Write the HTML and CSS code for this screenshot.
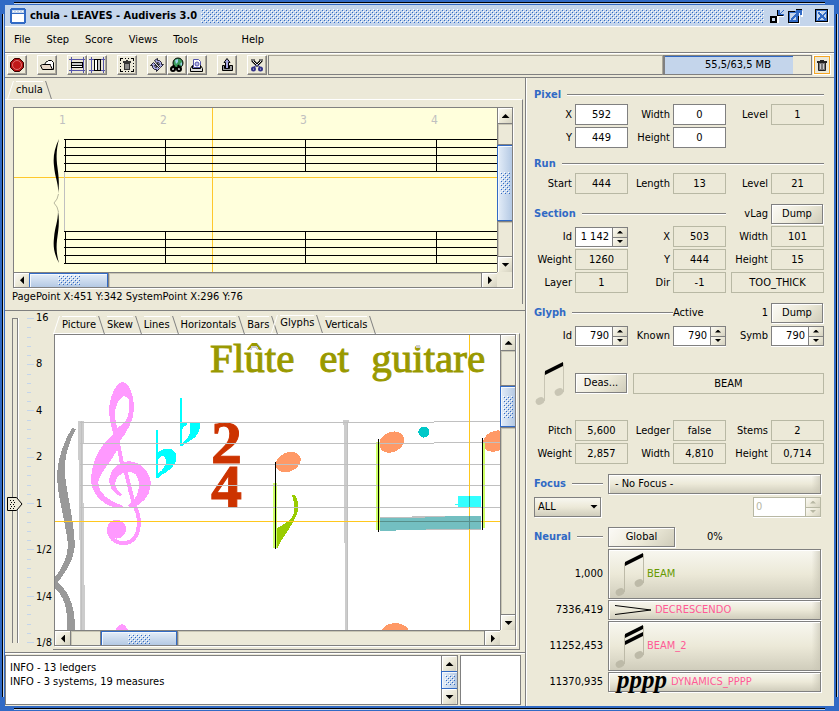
FILE: index.html
```html
<!DOCTYPE html>
<html lang="en">
<head>
<meta charset="utf-8">
<title>chula - LEAVES - Audiveris 3.0</title>
<link rel="stylesheet" href="styles.css">
</head>
<body>
<div class="window">
  <header class="titlebar">
    <svg class="app-icon" width="16" height="16" shape-rendering="crispEdges"><path fill="#316ac5" d="M1 0h14v1h1v14h-1v1H1v-1H0V1h1z"/><path fill="#fff" d="M2 6h12v8H2z"/><path fill="#c4d5eb" d="M2 2h12v3H2z"/><path stroke="#fff" stroke-dasharray="1 2" d="M3 3.500h10"/></svg>
    <h1>chula - LEAVES - Audiveris 3.0</h1>
    <div class="dots title-dots"></div>
    <div class="window-buttons">
      <button aria-label="Minimize"><svg width="16" height="16" shape-rendering="crispEdges"><path fill="#fff" d="M2 8h8v7H2zM9 8h6v1H9z"/><path fill="#316ac5" d="M9 2h2v3h1V4h1V3h1V2h1v1h-1v1h-1v1h-1v1h3v2H9z"/><path fill="#c4d5eb" stroke="#000" stroke-width="2" d="M2 9h5v5H2z"/><path fill="#000" d="M8 2h1v6H8zM8 7h6v1H8z"/></svg></button>
      <button aria-label="Maximize"><svg width="16" height="16" shape-rendering="crispEdges"><path fill="#fff" d="M2 4h11v12H2zM14 3h2v6h-2z"/><path fill="#316ac5" d="M1 3h11v12H1z"/><path fill="#c4d5eb" d="M3 5h6v7H3z"/><path fill="none" stroke="#000" d="M1.500 3.500H8M1.500 3v11.500h10V8"/><path fill="#316ac5" d="M9 1h6v6h-2V5h-1v1h-1v1h-1v1H9v1H8v1H7v1H6v1H4v-2h1V9h1V8h1V7h1V6h1V5h1V4h1V3H9z"/><path stroke="#000" d="M9 1.500h6"/></svg></button>
      <button class="close" aria-label="Close"><svg width="16" height="16" shape-rendering="crispEdges"><path fill="#fff" d="M2 2h13v13H2z"/><path fill="#c4d5eb" stroke="#316ac5" d="M2.500 2.500h10v10h-10z"/><path fill="none" stroke="#000" d="M1.500 1.500h12v12h-12z"/><path fill="#fff" d="M5 4h2v2H5zM10 5h2v1h-2zM5 9h2v1H5z"/><path fill="#316ac5" d="M4 4h2v1h1v1h1v1h1V6h1V5h1V4h1v2h-1v1h-1v2h1v1h1v2h-2v-1h-1v-1H7v1H6v1H4v-2h1V9h1V7H5V6H4z"/></svg></button>
    </div>
  </header>

  <nav class="menubar">
    <button>File</button><button>Step</button><button>Score</button><button>Views</button><button>Tools</button><button class="help">Help</button>
  </nav>

  <div class="toolbar">
    <button class="tool" aria-label="Stop"><svg width="16" height="16"><path fill="#b01010" stroke="#300" d="M5.500 1.500h5l4 4v5l-4 4h-5l-4-4v-5z"/><circle cx="8" cy="8" r="4.500" fill="#c01818" stroke="#e07070"/></svg></button>
    <span class="gap"></span>
    <button class="tool" aria-label="Open"><svg width="16" height="16"><path fill="#fff" stroke="#000" d="M5.500 7.500l2-3h1l1-1h3l2 2v7h-3"/><path fill="#e8d8c8" stroke="#000" d="M1.500 8.500l2-1h8v1l2 4h-10z"/></svg></button>
    <span class="gap"></span>
    <button class="tool" aria-label="Horizontal lag"><svg width="16" height="16" shape-rendering="crispEdges"><path stroke="#55a" d="M0 2.500h16M0 13.500h16M2.500 0v16M14.500 0v16"/><path fill="#c8c8c8" stroke="#000" d="M2.500 5.500h11v3h-11z"/><path fill="#fff" stroke="#000" d="M2.500 8.500h11v2h-11z"/></svg></button><button class="tool" aria-label="Vertical lag"><svg width="16" height="16" shape-rendering="crispEdges"><path stroke="#55a" d="M0 2.500h16M0 13.500h16M2.500 0v16M14.500 0v16"/><path fill="#fff" stroke="#000" d="M5.500 2.500h3v11h-3z"/><path fill="#c8c8c8" stroke="#000" d="M8.500 2.500h3v11h-3z"/></svg></button>
    <span class="gap"></span>
    <button class="tool" aria-label="Delete selection"><svg width="16" height="16" shape-rendering="crispEdges"><path fill="none" stroke="#000" d="M1.500 4V1.500H4M6 1.500h1M9 1.500h1M12 1.500h2.500V4M14.500 6v1M14.500 9v1M14.500 12v2.500H12M10 14.500H9M7 14.500H6M4 14.500H1.500V12M1.500 10V9M1.500 7V6"/><path fill="#888" stroke="#333" d="M5.500 6.500h5v6h-5z"/><path fill="#333" d="M4 4h8v2H4zM7 3h2v1H7z"/></svg></button>
    <span class="gap"></span>
    <button class="tool" aria-label="Refresh"><svg width="16" height="16"><path fill="#a8a8e0" stroke="#223" d="M5.500 3.500l3-2v2h2l2 2v2h2l-3 3-3-3h2l-1-2h-1v2zM1.500 8.500l3-3 3 3h-2l1 2h1v-2l3 3-3 3v-2h-2l-2-2v-2z"/></svg></button><button class="tool" aria-label="Find"><svg width="16" height="16"><circle cx="9" cy="6" r="5" fill="#3a9a5a" stroke="#000"/><path fill="#9ad0e8" d="M6 3l3-1v3L7 7zM11 7l2-2v4z"/><circle cx="4" cy="12" r="2" fill="#ddd" stroke="#000" stroke-width="2"/><circle cx="10" cy="12" r="2" fill="#ddd" stroke="#000" stroke-width="2"/><path stroke="#000" stroke-width="2" d="M5 8l-2 3M9 8l2 3M6 11h3"/></svg></button><button class="tool" aria-label="Print"><svg width="16" height="16"><path fill="#fff" stroke="#55a" d="M4.500 2.500h5l2 2v6h-7z"/><circle cx="8" cy="7" r="2" fill="#b8b8e8" stroke="#55a"/><path fill="#ddd" stroke="#000" d="M3.500 8.500l-2 3v3h12v-3l-2-3v3h-8z"/></svg></button>
    <span class="gap"></span>
    <button class="tool" aria-label="Export"><svg width="16" height="16"><path fill="#999" stroke="#000" d="M3.500 8.500h2v3h5v-3h3v5h-10z"/><path fill="#a8a8e0" stroke="#000" d="M8 1.500l3 4H9.500v6h-3v-6H5z"/></svg></button>
    <span class="gap"></span>
    <button class="tool" aria-label="Cut"><svg width="16" height="16"><path fill="none" stroke="#000" stroke-width="3" d="M4 2v2l5 5M12 2v2L7 9"/><path fill="none" stroke="#eee" d="M4 2v2l5 5M12 2v2l-5 5"/><circle cx="4.500" cy="12" r="1.500" fill="#fff" stroke="#338" stroke-width="2"/><circle cx="11.500" cy="12" r="1.500" fill="#fff" stroke="#338" stroke-width="2"/><path fill="none" stroke="#338" d="M5 10l3-2 3 2"/></svg></button>
    <input class="progress" type="text" readonly aria-label="Progress">
    <div class="memory"><span>55,5/63,5 MB</span></div>
    <button class="trash" aria-label="Run garbage collector"><svg width="14" height="16"><path fill="#777" stroke="#222" d="M3.500 5.500h7v8h-7z"/><path stroke="#ccc" d="M5.500 7v5M8.500 7v5"/><path stroke="#222" stroke-width="2" d="M2 5h10"/><path stroke="#222" d="M5 3.500h4"/></svg></button>
  </div>

  <main class="main">
    <section class="left">
      <div class="score">
        <div class="tabs score-tabs"><button class="tab first selected">chula</button></div>
        <div class="score-body">
          <div class="scrollpane">
            <svg class="view score-view" viewBox="14 108 483 164" preserveAspectRatio="xMinYMin slice" shape-rendering="crispEdges">
              <path stroke="#ffc82c" d="M14 177.500h483M212.500 108v164"/>
              <path stroke="#c0c0c0" d="M64.500 171v60"/>
              <path stroke="#000" d="M64 139.500h433M64 147.500h433M64 155.500h433M64 163.500h433M64 171.500h433M64 231.500h433M64 239.500h433M64 247.500h433M64 255.500h433M64 263.500h433M65.500 139v33M165.500 139v33M305.500 139v33M436.500 139v33M65.500 231v33M165.500 231v33M305.500 231v33M436.500 231v33"/>
              <g shape-rendering="auto"><path d="M59 139C54 149 53 158 54 166C55 178 59 184 58 194C60 182 58 172 57 164C56 154 57 147 59 139zM58 211C60 223 58 232 57 240C56 250 57 256 59 263C54 254 53 246 54 238C55 226 58 222 58 211z"/>
              <path fill="none" stroke="#b8b8a0" d="M58.500 194L57 199L54 203L57 207L58.500 212"/></g>
              <g class="measure-ids"><text x="59" y="124">1</text><text x="160" y="124">2</text><text x="300" y="124">3</text><text x="431" y="124">4</text></g>
            </svg>
            <div class="scroll v"><button aria-label="Up"><i class="arrow up"></i></button><span class="track a21"></span><span class="thumb a78"><b class="dots"></b></span><span class="track a35"></span><button aria-label="Down"><i class="arrow down"></i></button></div>
            <div class="scroll h"><button aria-label="Left"><i class="arrow lft"></i></button><span class="thumb a78"><b class="dots"></b></span><span class="track a374"></span><button aria-label="Right"><i class="arrow rgt"></i></button></div>
          </div>
          <p class="status">PagePoint X:451 Y:342 SystemPoint X:296 Y:76</p>
        </div>
      </div>

      <div class="sheet">
        <div class="zoom">
          <div class="slider">
            <input type="range" min="-3" max="4" value="0" aria-label="Zoom">
            <svg class="knob" width="16" height="14"><path fill="#ece9d8" stroke="#000" d="M.500.500h9l5.500 6.500-5.500 6.500h-9z"/><path stroke="#000" stroke-dasharray="1 2" d="M3 3.500h6M4 5.500h6M3 7.500h6M4 9.500h6M3 11.500h6"/></svg>
          </div>
          <svg class="ticks" width="8" height="325" shape-rendering="crispEdges"><path stroke="#c4d5eb" d="M0 .500h7M0 46.500h7M0 92.500h7M0 139.500h7M0 185.500h7M0 231.500h7M0 278.500h7M0 324.500h7M0 9.500h4M0 19.500h4M0 28.500h4M0 37.500h4M0 56.500h4M0 65.500h4M0 74.500h4M0 83.500h4M0 102.500h4M0 111.500h4M0 120.500h4M0 130.500h4M0 148.500h4M0 157.500h4M0 167.500h4M0 176.500h4M0 194.500h4M0 204.500h4M0 213.500h4M0 222.500h4M0 241.500h4M0 250.500h4M0 259.500h4M0 269.500h4M0 287.500h4M0 296.500h4M0 306.500h4M0 315.500h4"/></svg>
          <div class="zoom-labels"><span>16</span><span>8</span><span>4</span><span>2</span><span>1</span><span>1/2</span><span>1/4</span><span>1/8</span></div>
        </div>
        <div class="sheet-tabs">
          <div class="tabs"><button class="tab first">Picture</button><button class="tab">Skew</button><button class="tab">Lines</button><button class="tab">Horizontals</button><button class="tab">Bars</button><button class="tab selected">Glyphs</button><button class="tab">Verticals</button></div>
          <div class="sheet-body">
            <div class="scrollpane">
              <svg class="view" viewBox="55 335 445 295" preserveAspectRatio="xMinYMin slice" shape-rendering="crispEdges">
                <rect x="55" y="335" width="900" height="900" fill="#fff"/>
                <path fill="#999" d="M72 428l4 1C68 444 64 458 65 473C66 492 74 518 75 545C74 562 64 573 58 582C66 590 75 600 75 630H67C68 605 63 596 55 588v-11C62 568 68 557 68 545C66 524 57 495 57 474C58 457 64 441 72 428z"/>
                <path fill="#ccc" d="M78 421h6v22h-1v60h1v82h1v45h-5v-90h-1v-80h-1zM343 420h6v3h-1v210h1v0h-4v-90h-1V425h-1z"/>
                <g fill="#f9f">
                  <path fill-rule="evenodd" d="M122 382C115 384 109 398 109 412C110 422 112 428 113 434C100 446 91 460 91 482C93 497 106 507 120 508L124 506C108 501 98 493 98 482C101 470 111 463 117 450L120 441C128 430 134 420 134 407C133 392 128 382 122 382zM124 396C118 398 114 408 115 418L117 428C124 424 129 418 129 409C130 402 129 396 124 396z"/>
                  <path d="M120 496C113 493 109 487 109 479C111 468 119 461 129 461C141 462 150 472 151 484C150 497 141 505 131 508L128 505C136 500 139 492 139 483C138 475 134 471 128 472C120 472 115 478 115 484C116 489 119 492 122 494z"/>
                  <path fill="none" stroke="#f9f" stroke-width="4" d="M118 444C121 454 120 464 126 473C130 488 132 502 138 514C141 534 134 543 123 543C115 543 109 537 109 530"/>
                  <circle cx="116.500" cy="529" r="9.500"/><path d="M115 630l4-5 3-1 3 1 3 5z"/>
                </g>
                <g fill="#0ff">
                  <path fill-rule="evenodd" d="M156 430h2v22C163 448 171 447 174 451C178 455 177 461 173 466C168 472 163 473 158 478h-2zM158 459v14C163 470 166 466 166 460C165 454 161 455 158 459z"/>
                  <path fill-rule="evenodd" d="M180 398h2v25h5v2c-2 0-4 2-5 4v14c6-4 8-8 8-14v-6h10c0 6-1 10-5 14c-4 4-9 5-13 9h-2z"/>
                </g>
                <g class="time"><text x="211" y="463">2</text><text x="211" y="507">4</text></g>
                <g fill="#f96"><ellipse cx="288" cy="462" rx="13" ry="9.500" transform="rotate(-25 288 462)"/><ellipse cx="391.500" cy="442" rx="13" ry="10" transform="rotate(-25 391.500 442)"/><ellipse cx="495" cy="441" rx="13" ry="10" transform="rotate(-25 495 441)"/><ellipse cx="395" cy="633" rx="14" ry="10"/></g>
                <path fill="#9c0" d="M292 495h3C299 502 299 509 296 516C292 526 284 534 277 548v-20C284 524 290 521 293 515C295 509 294 502 292 495z"/>
                <circle cx="423.500" cy="432" r="5.500" fill="#00c8c8"/>
                <path fill="#cf6" d="M273 483h4v65h-4zM376 442h4v88h-4zM482 443h3v85h-3z"/>
                <path stroke="#c0c0c0" d="M80 422.500h354M434 421.500h66M80 443.500h354M434 442.500h66M80 464.500h420M80 485.500h420M80 507.500h420"/>
                <path stroke="#c0c0c0" d="M81.500 421v209M347.500 423v207"/>
                <path fill="#3ff" d="M458 496h23v11h-23v-2h-3v-1h3z"/>
                <path fill="#c0c0c0" d="M380 517l50-1h51v14H380z"/><path fill="#73bfc1" d="M380 518h45v-1h20v-1h36v13h-55v1h-30v1h-16z"/>
                <path stroke="#ffc81e" d="M55 521.500h445M469.500 335v295"/>
                <path stroke="#57908b" d="M380 521.500h101M469.500 516v13"/><path stroke="#20b0a0" d="M469.500 496v11"/>
                <path stroke="#000" d="M275.500 462v87M378.500 439v93M482.500 438v92"/>
                <g class="song-title"><text x="210" y="372">Flûte</text><text x="319" y="372">et</text><text x="371" y="372">guitare</text></g>
                <path fill="none" stroke="#ccc" stroke-width="2" d="M250 350l2-3h4l2 3"/><path fill="#ccc" d="M416 345h4v3h-4z"/>
              </svg>
              <div class="scroll v"><button aria-label="Up"><i class="arrow up"></i></button><span class="track a35"></span><span class="thumb a40"><b class="dots"></b></span><span class="track a189"></span><button aria-label="Down"><i class="arrow down"></i></button></div>
              <div class="scroll h"><button aria-label="Left"><i class="arrow lft"></i></button><span class="track a29"></span><span class="thumb a75"><b class="dots"></b></span><span class="track a310"></span><button aria-label="Right"><i class="arrow rgt"></i></button></div>
            </div>
          </div>
        </div>
      </div>

      <div class="bottom">
        <div class="log">
          <div class="log-text">INFO - 13 ledgers<br>INFO - 3 systems, 19 measures</div>
          <div class="scroll v"><button aria-label="Up"><i class="arrow up"></i></button><span class="thumb a78"><b class="dots"></b></span><button aria-label="Down"><i class="arrow down"></i></button></div>
        </div>
        <div class="errors"></div>
      </div>
    </section>

    <aside class="boards">
      <section>
        <div class="heading"><h2>Pixel</h2><hr></div>
        <div class="fields">
          <label for="px">X</label><input id="px" value="592"><label for="pw">Width</label><input id="pw" value="0"><label for="pl">Level</label><input id="pl" value="1" readonly>
          <label for="py">Y</label><input id="py" value="449"><label for="ph">Height</label><input id="ph" value="0">
        </div>
      </section>
      <section>
        <div class="heading"><h2>Run</h2><hr></div>
        <div class="fields">
          <label for="rs">Start</label><input id="rs" value="444" readonly><label for="rl">Length</label><input id="rl" value="13" readonly><label for="rv">Level</label><input id="rv" value="21" readonly>
        </div>
      </section>
      <section>
        <div class="fields">
          <div class="heading span4"><h2>Section</h2><hr></div><span class="tag">vLag</span><button class="btn">Dump</button>
          <label for="si">Id</label><div class="spin"><input id="si" value="1 142"><div><button aria-label="Increase"><i class="arrow up"></i></button><button aria-label="Decrease"><i class="arrow down"></i></button></div></div><label for="sx">X</label><input id="sx" value="503" readonly><label for="sw">Width</label><input id="sw" value="101" readonly>
          <label for="sg">Weight</label><input id="sg" value="1260" readonly><label for="sy">Y</label><input id="sy" value="444" readonly><label for="sh">Height</label><input id="sh" value="15" readonly>
          <label for="sl">Layer</label><input id="sl" value="1" readonly><label for="sd">Dir</label><input id="sd" value="-1" readonly><input class="span2 inset" value="TOO_THICK" readonly aria-label="Section kind">
        </div>
      </section>
      <section>
        <div class="fields">
          <div class="heading span2"><h2>Glyph</h2><hr></div><hr class="rule"><span>Active</span><span class="tag">1</span><button class="btn">Dump</button>
          <label for="gi">Id</label><div class="spin"><input id="gi" value="790"><div><button aria-label="Increase"><i class="arrow up"></i></button><button aria-label="Decrease"><i class="arrow down"></i></button></div></div><label for="gk">Known</label><div class="spin"><input id="gk" value="790"><div><button aria-label="Increase"><i class="arrow up"></i></button><button aria-label="Decrease"><i class="arrow down"></i></button></div></div><label for="gs">Symb</label><div class="spin"><input id="gs" value="790"><div><button aria-label="Increase"><i class="arrow up"></i></button><button aria-label="Decrease"><i class="arrow down"></i></button></div></div>
        </div>
        <div class="fields shape-row">
          <svg width="32" height="46"><g fill="#c8c5b4"><ellipse cx="6" cy="41" rx="4.500" ry="3.500" transform="rotate(-25 6 41)"/><ellipse cx="25" cy="32" rx="4.500" ry="3.500" transform="rotate(-25 25 32)"/><path d="M10 12h1v29h-1zM29 3h1v29h-1z"/></g><path d="M11 11l18-9v4l-18 9z"/></svg>
          <button class="btn">Deas...</button><input class="span4 inset" value="BEAM" readonly aria-label="Glyph shape">
        </div>
        <div class="fields">
          <label for="gp">Pitch</label><input id="gp" value="5,600" readonly><label for="gl">Ledger</label><input id="gl" value="false" readonly><label for="gt">Stems</label><input id="gt" value="2" readonly>
          <label for="gg">Weight</label><input id="gg" value="2,857" readonly><label for="gw">Width</label><input id="gw" value="4,810" readonly><label for="gh">Height</label><input id="gh" value="0,714" readonly>
        </div>
      </section>
      <section class="pair">
        <div class="heading"><h2>Focus</h2><hr></div><button class="btn start">- No Focus -</button>
        <div class="select"><select aria-label="Focus filter"><option>ALL</option></select><i class="arrow down big"></i></div>
        <div class="spin off"><input value="0" disabled aria-label="Focus index"><div><button disabled aria-label="Increase"><i class="arrow up"></i></button><button disabled aria-label="Decrease"><i class="arrow down"></i></button></div></div>
      </section>
      <section class="pair">
        <div class="heading"><h2>Neural</h2><hr></div><div class="neural"><button class="btn">Global</button><span>0%</span></div>
      </section>
      <div class="results">
        <span>1,000</span>
        <button class="btn start tall good"><svg width="30" height="46"><g fill="#bdbaa8"><ellipse cx="5" cy="41" rx="4.500" ry="3.500" transform="rotate(-25 5 41)"/><ellipse cx="24" cy="32" rx="4.500" ry="3.500" transform="rotate(-25 24 32)"/><path d="M9 12h1v29H9zM28 3h1v29h-1z"/></g><path d="M10 11l18-9v4l-18 9z"/></svg>BEAM</button>
        <span>7336,419</span>
        <button class="btn start bad"><svg width="38" height="12"><path fill="none" stroke="#000" d="M0 1.500L36 6L0 10.500"/></svg>DECRESCENDO</button>
        <span>11252,453</span>
        <button class="btn start tall bad"><svg width="30" height="46"><g fill="#bdbaa8"><ellipse cx="5" cy="41" rx="4.500" ry="3.500" transform="rotate(-25 5 41)"/><ellipse cx="24" cy="32" rx="4.500" ry="3.500" transform="rotate(-25 24 32)"/><path d="M9 12h1v29H9zM28 3h1v29h-1z"/></g><path d="M10 11l18-9v4l-18 9zM10 18l18-9v4l-18 9z"/></svg>BEAM_2</button>
        <span>11370,935</span>
        <button class="btn start bad"><em>pppp</em>DYNAMICS_PPPP</button>
      </div>
    </aside>
  </main>
</div>
</body>
</html>
```
FILE: styles.css
```css
:root {
  --blue: #316ac5;
  --pale: #c4d5eb;
  --face: #ece9d8;
  --edge: #808080;
  --soft: #b8b8a4;
  --metal: linear-gradient(135deg, #faf9f4 0%, #ece9d8 50%, #d4d1c0 100%);
}

* { box-sizing: border-box; }

body {
  margin: 0;
  background: var(--blue);
  color: #000;
  font: 11px/14px "DejaVu Sans Condensed", "DejaVu Sans", sans-serif;
}

button, input, select {
  margin: 0;
  padding: 0;
  border: 0;
  border-radius: 0;
  color: inherit;
  font: inherit;
}

h1, h2, p { margin: 0; font-size: 11px; }
svg { display: block; }

/* Window frame: blue border with an embossed line on each side. */
.window {
  display: flex;
  flex-direction: column;
  height: 100vh;
  min-height: 700px;
  padding: 5px;
  background:
    linear-gradient(#000, #000) center top 2px / calc(100% - 28px) 1px no-repeat,
    linear-gradient(var(--pale), var(--pale)) center top 3px / calc(100% - 28px) 1px no-repeat,
    linear-gradient(#000, #000) center bottom 2px / calc(100% - 28px) 1px no-repeat,
    linear-gradient(var(--pale), var(--pale)) center bottom 1px / calc(100% - 28px) 1px no-repeat,
    linear-gradient(#000, #000) left 2px center / 1px calc(100% - 28px) no-repeat,
    linear-gradient(var(--pale), var(--pale)) left 3px center / 1px calc(100% - 28px) no-repeat,
    linear-gradient(#000, #000) right 2px center / 1px calc(100% - 28px) no-repeat,
    linear-gradient(var(--pale), var(--pale)) right 1px center / 1px calc(100% - 28px) no-repeat,
    var(--blue);
}

.dots {
  background-image:
    conic-gradient(from 270deg at 1px 1px, var(--blue) 90deg, transparent 0),
    conic-gradient(from 270deg at 1px 1px, var(--blue) 90deg, transparent 0),
    conic-gradient(from 270deg at 1px 1px, #fff 90deg, transparent 0),
    conic-gradient(from 270deg at 1px 1px, #fff 90deg, transparent 0);
  background-position: 1px 1px, 3px 3px, 0 0, 2px 2px;
  background-size: 4px 4px;
}

.titlebar {
  display: flex;
  flex: none;
  align-items: center;
  height: 21px;
  padding: 0 4px 0 5px;
  background: var(--pale);
}
.titlebar h1 { margin-left: 4px; }
.title-dots { flex: 1; height: 14px; margin: 0 5px 0 4px; }
.window-buttons { display: flex; gap: 2px; }
.window-buttons button { background: none; }
.window-buttons .close { margin-left: 9px; }

.menubar {
  display: flex;
  flex: none;
  align-items: center;
  gap: 16px;
  height: 26px;
  padding: 0 9px;
  border-top: 1px solid #fff;
  background: var(--face);
}
.menubar button { background: none; }
.menubar .help { margin-left: 28px; }

.toolbar {
  display: flex;
  flex: none;
  align-items: center;
  height: 26px;
  padding: 0 2px;
  border-top: 1px solid var(--edge);
  border-bottom: 1px solid var(--edge);
  background: linear-gradient(#fff, #fff) top / 100% 1px no-repeat, var(--face);
}
.gap { width: 10px; }
.tool {
  width: 20px;
  height: 20px;
  padding: 1px;
  border: 1px solid;
  border-color: #fff var(--edge) var(--edge) #fff;
  box-shadow: inset -1px -1px #aca899;
  background: var(--face);
}
.progress {
  flex: 1;
  min-width: 0;
  height: 20px;
  margin-left: 1px;
  border: 1px solid;
  border-color: #aca899 #aca899 var(--edge) var(--edge);
  background: var(--face);
}
.memory {
  width: 149px;
  height: 20px;
  border: 1px solid var(--edge);
  border-left-width: 2px;
  background: linear-gradient(var(--blue), var(--blue)) top left / 88% 1px no-repeat,
    linear-gradient(var(--pale), var(--pale)) left / 88% 100% no-repeat, var(--face);
  line-height: 18px;
  text-align: center;
}
.trash {
  margin: 0 2px;
  border: 1px solid #f5a623;
  outline: 1px solid #fff;
  background: var(--face);
}

.main {
  display: grid;
  flex: 1;
  grid-template: minmax(0, 1fr) / minmax(0, 1fr) 309px;
  min-height: 0;
  background: var(--face);
}
.left { display: flex; flex-direction: column; min-width: 0; }

/* Tabs with slanted sides */
.tabs { display: flex; align-items: flex-end; gap: 11px; padding-left: 9px; }
.tab {
  position: relative;
  height: 17px;
  border-top: 1px solid #fff;
  background: none;
}
.tab::after, .tab.first::before, .tab.selected::before {
  position: absolute;
  top: -1px;
  right: -6px;
  width: 5px;
  height: 18px;
  border-right: 1px solid var(--edge);
  transform: skewX(18deg);
  content: "";
}
.tab.first::before, .tab.selected::before {
  right: auto;
  left: -6px;
  border-right: 0;
  border-left: 1px solid #fff;
  transform: skewX(-18deg);
}
.tab.selected { height: 18px; padding-bottom: 2px; }

.score { display: flex; flex: 233 1 0; flex-direction: column; min-height: 0; border-bottom: 1px solid var(--edge); }
.score-tabs { height: 21px; padding-left: 11px; }
.score-body {
  display: flex;
  flex: 1;
  flex-direction: column;
  min-height: 0;
  margin: 0 2px 6px 0;
  padding: 7px 9px 0 8px;
  border-top: 1px solid #fff;
  border-right: 1px solid var(--edge);
}
.status { padding-top: 2px; margin-left: -1px; font-weight: normal; }

.scrollpane {
  display: grid;
  flex: 1;
  grid-template: minmax(0, 1fr) 15px / minmax(0, 1fr) 15px;
  min-width: 0;
  min-height: 0;
  border: 1px solid var(--edge);
  box-shadow: 1px 1px #fff;
}
.view { width: 100%; height: 100%; }
.score-view { background: #ffffdc; }
.measure-ids { fill: #c0c0c0; font: 12px/14px "DejaVu Sans Condensed", sans-serif; }
.song-title { fill: #990; stroke: #990; font: 41px/44px "Liberation Serif", serif; }
.time { fill: #c30; stroke: #c30; font: bold 62px/64px "Liberation Serif", serif; }

.scroll { display: flex; min-width: 0; min-height: 0; }
.scroll.v { flex-direction: column; border-left: 1px solid var(--edge); }
.scroll.h { border-top: 1px solid var(--edge); }
.scroll button {
  display: grid;
  flex: none;
  place-items: center;
  width: 15px;
  height: 15px;
  border: 1px solid #fff;
  background: var(--metal);
}
.scroll.v button { width: 14px; border-width: 1px 0 0 1px; }
.scroll.h button { height: 14px; border-width: 1px 0 0 1px; }
.track { box-shadow: inset 1px 1px #c8c5b4; border: 0 solid var(--edge); }
.scroll.v .track { border-width: 1px 0; }
.scroll.h .track { border-width: 0 1px; }
.thumb {
  display: grid;
  place-items: center;
  border: 1px solid var(--blue);
  background: linear-gradient(90deg, #e4edf8, #b4c9e4);
  box-shadow: inset 1px 1px #f4f8fd;
}
.scroll.h .thumb { border-bottom: 0; background: linear-gradient(#e4edf8, #b4c9e4); }
.scroll.v .thumb { border-width: 1px 0; margin-left: -1px; border-left-width: 1px; }
.thumb .dots { width: 22px; height: 10px; }
.scroll.v .dots { width: 10px; height: 22px; }
.log .scroll.v .dots { height: 10px; }
.a21 { flex: 21 1 0; }
.a29 { flex: 29 1 0; }
.a35 { flex: 35 1 0; }
.a40 { flex: 40 1 0; }
.a75 { flex: 75 1 0; }
.a78 { flex: 78 1 0; }
.a189 { flex: 189 1 0; }
.a310 { flex: 310 1 0; }
.a374 { flex: 374 1 0; }

.arrow { display: block; width: 8px; height: 4px; background: #000; }
.up { clip-path: polygon(50% 0, 100% 100%, 0 100%); }
.down { clip-path: polygon(0 0, 100% 0, 50% 100%); }
.lft, .rgt { width: 4px; height: 8px; }
.lft { clip-path: polygon(100% 0, 100% 100%, 0 50%); }
.rgt { clip-path: polygon(0 0, 100% 50%, 0 100%); }

/* Sheet area: zoom slider and tabbed views */
.sheet { display: flex; flex: 343 1 0; min-height: 0; border-bottom: 1px solid var(--edge); }
.zoom { display: flex; flex: none; width: 48px; padding-left: 2px; }
.slider { position: relative; width: 16px; margin: 7px 4px 9px 0; }
.slider input {
  width: 16px;
  height: 100%;
  background: linear-gradient(#fff, #fff) 11px 0 / 1px 100% no-repeat,
    linear-gradient(var(--edge), var(--edge)) 5px 0 / 6px 1px no-repeat,
    linear-gradient(90deg, var(--edge) 1px, transparent 1px 5px, var(--edge) 5px) 5px 0 / 6px 100% no-repeat;
  appearance: none;
  direction: rtl;
  writing-mode: vertical-lr;
}
.slider input::-webkit-slider-thumb { width: 16px; height: 14px; appearance: none; opacity: 0; }
.knob { position: absolute; top: 55%; left: 0; }
.ticks { flex: none; margin-top: 7px; }
.zoom-labels { display: flex; flex-direction: column; justify-content: space-between; width: 18px; padding: 0 0 2px 1px; }
.sheet-tabs { display: flex; flex: 1; flex-direction: column; min-width: 0; padding-top: 4px; }
.sheet-body {
  display: flex;
  flex: 1;
  min-height: 0;
  margin: 0 5px 2px 0;
  padding: 0 3px 3px 1px;
  border: solid var(--edge);
  border-width: 1px 1px 1px 0;
  border-top-color: #fff;
}

.bottom { display: grid; flex: none; grid-template-columns: minmax(0, 1fr) 61px; gap: 2px; height: 53px; padding: 1px 4px 1px 0; border-top: 1px solid #fff; }
.log, .errors { display: flex; border: 1px solid var(--edge); background: #fff; }
.log-text { flex: 1; padding: 5px 4px; }
.log .scroll { width: 16px; background: var(--face); }

/* Boards */
.boards { padding: 10px 10px 13px 8px; border-left: 1px solid var(--edge); box-shadow: inset 1px 0 #fff; }
.boards section { margin-bottom: 9px; }
.heading { display: flex; align-items: center; gap: 6px; margin-bottom: 2px; white-space: nowrap; }
.heading h2 { color: var(--blue); }
hr { flex: 1; height: 2px; margin: 0; border: solid var(--edge); border-width: 1px 0 0; background: #fff; }
.rule { width: 100%; }
.fields {
  display: grid;
  grid-template-columns: 41px minmax(0, 1fr) 45px minmax(0, 1fr) 45px minmax(0, 1fr);
  grid-auto-rows: 21px;
  gap: 2px 0;
  align-items: center;
}
.fields .heading, .pair .heading { margin-bottom: 0; }
.fields label, .tag { padding-right: 3px; text-align: right; white-space: nowrap; }
.fields > input, .spin { width: 100%; min-width: 0; height: 21px; }
.fields input {
  border: 1px solid var(--edge);
  background: #fff;
  box-shadow: inset -1px -1px #fff;
  text-align: center;
}
.fields input:read-only { border-color: var(--soft); background: var(--face); box-shadow: none; }
.span2 { grid-column: span 2; }
.span4 { grid-column: span 4; }
.fields .inset { justify-self: end; width: calc(100% - 5px); }
.shape-row { grid-auto-rows: 46px; margin: 14px 0; }

.btn {
  display: flex;
  align-items: center;
  justify-content: center;
  height: 20px;
  margin-right: 1px;
  border: 1px solid var(--edge);
  background: linear-gradient(135deg, #fbfaf6 0%, #ece9d8 55%, #cfccba 100%);
  box-shadow: inset 1px 1px #fff, 1px 1px #fff;
  white-space: nowrap;
}
.btn.start {
  justify-content: flex-start;
  padding-left: 6px;
  margin-right: 0;
  background: linear-gradient(90deg, transparent 96%, #c8c5b4aa), linear-gradient(#f8f7f0, #ece9d8 50%, #d0cdbc);
}

.spin { display: flex; height: 20px; border: 1px solid var(--edge); box-shadow: 0 1px #fff; background: #fff; }
.fields .spin input { flex: 1; min-width: 0; padding-right: 3px; border: 0; box-shadow: none; text-align: right; }
.spin > div { display: grid; flex: none; grid-template-rows: 1fr 1fr; width: 15px; border-left: 1px solid var(--edge); }
.spin button { display: grid; place-items: center; min-height: 0; background: var(--metal); }
.spin button + button { border-top: 1px solid var(--edge); }
.spin .arrow { width: 6px; height: 3px; }

.pair { display: grid; grid-template-columns: 69px minmax(0, 1fr); grid-auto-rows: 21px; gap: 2px 5px; align-items: center; padding-right: 3px; }
.select { position: relative; width: 67px; }
.select select { display: block; width: 100%; height: 20px; padding: 0 3px; border: 1px solid var(--edge); background: linear-gradient(#f8f7f0, #ece9d8 50%, #d0cdbc); box-shadow: 1px 1px #fff; appearance: none; }
.big { position: absolute; top: 8px; right: 3px; pointer-events: none; }
.off { justify-self: end; width: 68px; border-color: var(--soft); color: var(--soft); }
.off input { flex: 1; min-width: 0; padding-left: 2px; background: #fff; color: var(--soft); }
.off > div, .off button + button { border-color: var(--soft); }
.off .arrow { background: var(--soft); }
.neural { display: flex; align-items: center; gap: 31px; }
.neural .btn { width: 67px; }
.boards section:last-of-type { margin-bottom: 2px; }

.results { display: grid; grid-template-columns: 69px minmax(0, 1fr); gap: 1px 5px; align-items: center; padding-right: 3px; text-align: right; }
.results .tall { height: 50px; gap: 2px; }
.good { color: #690; }
.bad { color: #ff5a96; gap: 2px; }
.bad em { padding: 0 2px 4px; color: #000; font: italic bold 25px/14px "Liberation Serif", serif; }
```
